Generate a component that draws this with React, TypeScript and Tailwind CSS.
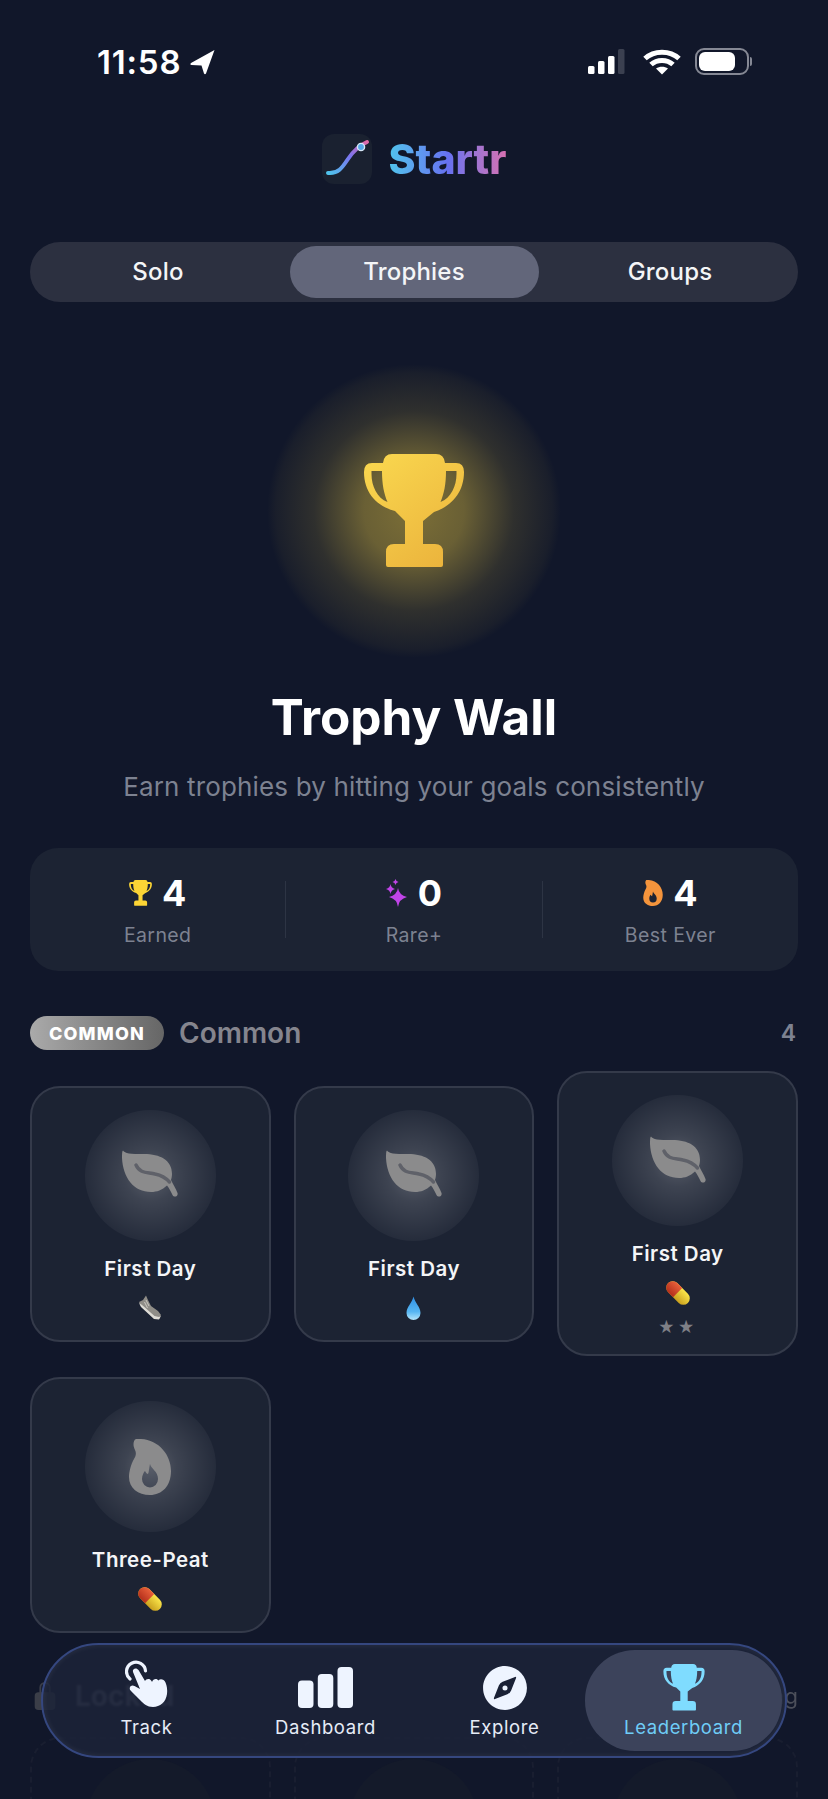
import React from "react";
import { IoCompass, IoLockClosed } from "react-icons/io5";

function Trophy({ w, h, fill }: { w: number; h: number; fill: string }) {
  return (
    <svg width={w} height={h} viewBox="0 0 100 114">
      <path
        fillRule="evenodd"
        fill={fill}
        d="M19 9 Q20 0 28 0 H72 Q80 0 81 9 H92 Q100 9 100 18 C100 38 88 52 70 58 L59 67 V90 H71 Q79 90 79 98 V111 Q79 113 77 113 H24 Q22 113 22 111 V98 Q22 90 30 90 H41 V67 L31 57 C12 52 0 38 0 18 Q0 9 8 9 Z M7.5 17 H18 C18 30 20 40 23.5 48 C13 44 7.5 32 7.5 20 Z M92.5 17 H82 C82 30 80 40 76.5 48 C87 44 92.5 32 92.5 20 Z"
      />
    </svg>
  );
}

function Flame({ w, h, fill }: { w: number; h: number; fill: string }) {
  return (
    <svg width={w} height={h} viewBox="0 0 42 56">
      <path
        fillRule="evenodd"
        fill={fill}
        d="M6 0.5 C4 3 4 7 6 11 C7.5 14 7 17 5 20 C2 25 0 33 0 38 C0 49 9 56 21 56 C33 56 42 47 42 32 C42 16 30 1 12 0 C9 -0.2 7 -0.2 6 0.5 Z M21 25 C22 30 29 32 29 40 A8 8.5 0 0 1 13 40 C13 36 15 33 16 32 C17 34 18 35 19 35 C20 33 20 29 21 25 Z"
      />
    </svg>
  );
}

const Leaf = () => (
  <svg className="mb-[3px]" width="56" height="47" viewBox="0 0 56 47">
    <path
      fill="#8b8b8c"
      d="M1 0.5 C3 3.5 8 4 22 4 C38 4 50 10 50 24 C50 26 49.5 28.5 49 30 C51 34 54 39 55.5 43 C56.5 46.5 52 48 50.5 45 C49 41.5 47 38 45 35.5 C40 40 35 42 29 42 C12 42 1 28 0 8 C0 4 0 1 1 0.5 Z"
    />
    <path d="M14 15 C18 24 26 22 33 24 C38 25 43 27 47.5 32" fill="none" stroke="#5f6169" strokeWidth="3.5" strokeLinecap="round" />
  </svg>
);

const Sparkle = () => (
  <svg width="22" height="28" viewBox="0 0 22 28" fill="#c044e8">
    <path d="M12 9 Q13 16 21 18 Q13 20 12 28 Q11 20 3 18 Q11 16 12 9 Z" />
    <path d="M4.5 5 Q5 9 9 10 Q5 11 4.5 15 Q4 11 0 10 Q4 9 4.5 5 Z" />
    <path d="M9.5 0 Q10 2.5 12.5 3 Q10 3.5 9.5 6 Q9 3.5 6.5 3 Q9 2.5 9.5 0 Z" />
  </svg>
);

const Hand = () => (
  <svg className="mb-[8px]" width="43" height="48" viewBox="0 0 43 48">
    <path d="M20.5 11 A9.5 9.5 0 1 0 5 19" fill="none" stroke="#eef4ff" strokeWidth="3.2" strokeLinecap="round" />
    <path
      fill="#eef4ff"
      d="M8 12 C7 8.5 11.5 7 13.5 10 L20 21 C21 18.5 25 18 26.5 21 L27 22 C28 18.5 32 18 33.5 20.5 C35 18.5 39 19 40.5 22.5 C42 26 42.5 30 42 34 C41 42 35 47 28 47 C22 47 19 44 15 40 L6 31 C3 28 6 24 9.5 26 L15 29 Z"
    />
  </svg>
);

const Shoe = () => (
  <svg width="24" height="25" viewBox="0 0 24 25">
    <path d="M8 0.5 L9.5 4 L13 11 L20 16 L23 20 L21 24 L16 23 L3 11 L1 7 L5 5 Z" fill="#8f8d88" />
    <path d="M1 8 L3 12 L16 24 L21 24.5 L23 21 L21 22 L16.5 21 L4 10 Z" fill="#dedcd6" />
    <path d="M8 5 L11 11 M6.5 7 L9.5 13" stroke="#c9c7c1" strokeWidth="1" />
  </svg>
);

const Drop = () => (
  <svg width="15" height="24" viewBox="0 0 15 24">
    <defs>
      <linearGradient id="dropG" x1="0" y1="0" x2="0" y2="1">
        <stop offset="0" stopColor="#2f8fe6" />
        <stop offset="0.65" stopColor="#57b6f2" />
        <stop offset="1" stopColor="#b5e6fc" />
      </linearGradient>
    </defs>
    <path d="M7.5 0.5 C9 7 14.5 11 14.5 17 A7 7 0 0 1 0.5 17 C0.5 11 6 7 7.5 0.5 Z" fill="url(#dropG)" />
  </svg>
);

const Pill = () => (
  <svg width="24" height="24" viewBox="0 0 24 24">
    <defs>
      <linearGradient id="pillY" x1="0" y1="0" x2="0" y2="1">
        <stop offset="0" stopColor="#fbe64a" />
        <stop offset="1" stopColor="#c9a01e" />
      </linearGradient>
      <linearGradient id="pillR" x1="0" y1="0" x2="0" y2="1">
        <stop offset="0" stopColor="#e9603a" />
        <stop offset="1" stopColor="#b42f1c" />
      </linearGradient>
    </defs>
    <g transform="rotate(45 12 12)">
      <rect x="-2" y="5.5" width="28" height="13" rx="6.5" fill="url(#pillY)" />
      <path d="M4.5 5.5 H11.5 V18.5 H4.5 A6.5 6.5 0 0 1 4.5 5.5 Z" fill="url(#pillR)" />
    </g>
  </svg>
);

function Card({ name, icon, emoji, stars }: { name: string; icon: React.ReactNode; emoji: React.ReactNode; stars?: boolean }) {
  return (
    <div className={`flex flex-col items-center rounded-[30px] border-2 border-[#343a4a] bg-[#1c2333] pt-[22px] ${stars ? "pb-[18px]" : "pb-[20px]"}`}>
      <div className="flex h-[131px] w-[131px] items-center justify-center rounded-full bg-[radial-gradient(circle,rgba(255,255,255,0.27)_0%,rgba(255,255,255,0.15)_28%,rgba(255,255,255,0.045)_70%)]">
        {icon}
      </div>
      <div className="mt-[15px] text-[20.5px] font-semibold leading-[26px] tracking-[0.5px] text-[#f4f5f7]">{name}</div>
      <div className="mt-[14px] flex h-[24px] items-center justify-center">{emoji}</div>
      {stars && <div className="mt-[13px] text-[16px] leading-[18px] tracking-[3px] text-[#7e7f86]">★★</div>}
    </div>
  );
}

function Stat({ icon, value, label }: { icon: React.ReactNode; value: string; label: string }) {
  return (
    <div className="flex flex-1 flex-col items-center pt-[5px]">
      <div className="flex h-[32px] items-center gap-[10px]">
        {icon}
        <span className="text-[36px] font-bold leading-[32px] text-white">{value}</span>
      </div>
      <div className="mt-[14px] text-[19.5px] leading-[24px] tracking-[0.4px] text-[#7d8291]">{label}</div>
    </div>
  );
}

function GhostCard() {
  return (
    <div className="flex h-[200px] justify-center rounded-[30px] border-2 border-dashed border-[#191e30] pt-[20px]">
      <div className="h-[131px] w-[131px] rounded-full bg-[#141a2a]" />
    </div>
  );
}

function NavItem({ icon, label, active }: { icon: React.ReactNode; label: string; active?: boolean }) {
  return (
    <div className={`flex flex-col items-center justify-center ${active ? "mx-[-9px] h-[101px] rounded-[50px] bg-[#3c435b]" : ""}`}>
      <div className="flex h-[50px] items-center justify-center">{icon}</div>
      <div className={`mt-[2px] text-[18.5px] font-normal leading-[24px] tracking-[0.6px] ${active ? "text-[#6fcdf7]" : "text-[#e6ecf7]"}`}>{label}</div>
    </div>
  );
}

export default function App() {
  return (
    <div className="relative h-[1799px] w-[828px] overflow-hidden bg-[#11172a] font-['Inter',sans-serif] text-white">
      <svg className="absolute h-0 w-0">
        <defs>
          <linearGradient id="goldG" x1="0.15" y1="0" x2="0.85" y2="1">
            <stop offset="0" stopColor="#f9d64e" />
            <stop offset="1" stopColor="#ebb33c" />
          </linearGradient>
        </defs>
      </svg>

      {/* Status bar */}
      <div className="flex items-center justify-between pt-[48px] pr-[76px] pl-[97px]">
        <div className="flex h-[26px] items-center gap-[8px]">
          <span className="text-[33px] font-semibold leading-[26px] tracking-[0.8px]">11:58</span>
          <svg width="27" height="26" viewBox="0 0 26 26" fill="#fff">
            <path d="M25 1 L1.5 14 Q0 15.5 2 16 L12 16.5 L14.5 24.5 Q15.5 26 16.5 24.5 Z" />
          </svg>
        </div>
        <div className="flex items-center gap-[14px]">
          <svg width="42" height="26" viewBox="0 0 42 26">
            <rect x="1" y="17" width="6.5" height="8" rx="1.5" fill="#fff" />
            <rect x="11" y="12" width="6.5" height="13" rx="1.5" fill="#fff" />
            <rect x="21" y="7" width="6.5" height="18" rx="1.5" fill="#fff" />
            <rect x="31" y="0" width="6.5" height="25" rx="1.5" fill="#3b4050" />
          </svg>
          <svg width="38" height="26" viewBox="0 0 38 26" fill="none" stroke="#fff" strokeWidth="5">
            <path d="M2 9.5 C11 1 27 1 36 9.5" />
            <path d="M8 15.5 C14 10 24 10 30 15.5" />
            <path d="M19 25.5 L13 19.5 C16.5 17 21.5 17 25 19.5 Z" fill="#fff" stroke="none" />
          </svg>
          <div className="flex items-center">
            <div className="flex h-[27px] w-[54px] items-center rounded-[9px] border-2 border-[#858894] p-[2px]">
              <div className="h-full w-[36px] rounded-[6px] bg-white" />
            </div>
            <div className="ml-[1px] h-[9px] w-[2px] rounded-r-full bg-[#858894]" />
          </div>
        </div>
      </div>

      {/* Logo */}
      <div className="mt-[59px] flex items-center justify-center gap-[17px]">
        <div className="flex h-[50px] w-[50px] items-center justify-center rounded-[12px] bg-[#1a2130]">
          <svg width="50" height="50" viewBox="0 0 50 50" fill="none">
            <defs>
              <linearGradient id="logoG" x1="0" y1="1" x2="1" y2="0">
                <stop offset="0" stopColor="#4fc3ec" />
                <stop offset="0.55" stopColor="#7a74ef" />
                <stop offset="1" stopColor="#e06aa8" />
              </linearGradient>
            </defs>
            <path d="M6 39 C16 40 20 34 26 25 C30 19 36 12 45 8" stroke="url(#logoG)" strokeWidth="4" strokeLinecap="round" />
            <circle cx="39" cy="13" r="3.6" fill="#55a8e8" stroke="#d8e8f8" strokeWidth="1.4" />
          </svg>
        </div>
        <span className="bg-gradient-to-r from-[#4fc3ec] via-[#6670f0] to-[#d86fb0] bg-clip-text text-[41px] font-extrabold leading-[48px] text-transparent">
          Startr
        </span>
      </div>

      {/* Tabs */}
      <div className="mx-[30px] mt-[58px] grid h-[60px] grid-cols-3 items-center rounded-[30px] bg-[#2c3040] text-[24px] font-medium tracking-[0.2px] text-[#f4f5f7]">
        <div className="text-center">Solo</div>
        <div className="mx-auto flex h-[52px] w-[249px] items-center justify-center rounded-[26px] bg-[#62667a]">Trophies</div>
        <div className="text-center">Groups</div>
      </div>

      {/* Hero */}
      <div className="mt-[62px] flex flex-col items-center">
        <div className="flex h-[294px] w-[294px] items-center justify-center rounded-full bg-[radial-gradient(circle_closest-side,rgba(250,214,70,0.46)_0%,rgba(250,214,70,0.38)_34%,rgba(250,214,70,0.13)_68%,rgba(250,214,70,0.04)_94%,rgba(250,214,70,0)_100%)]">
          <Trophy w={100} h={114} fill="url(#goldG)" />
        </div>
        <h1 className="mt-[28px] text-[49.5px] font-bold leading-[62px] text-white">Trophy Wall</h1>
        <p className="mt-[22px] text-[26px] leading-[34px] tracking-[0.15px] text-[#7d8291]">Earn trophies by hitting your goals consistently</p>
      </div>

      {/* Stats */}
      <div className="mx-[30px] mt-[44px] flex h-[123px] items-center rounded-[28px] bg-[#1c2333]">
        <Stat icon={<Trophy w={23} h={26} fill="#fcd535" />} value="4" label="Earned" />
        <div className="h-[57px] w-px bg-[#2d3444]" />
        <Stat icon={<Sparkle />} value="0" label="Rare+" />
        <div className="h-[57px] w-px bg-[#2d3444]" />
        <Stat icon={<Flame w={20} h={26} fill="#f4943c" />} value="4" label="Best Ever" />
      </div>

      {/* Section header */}
      <div className="mx-[30px] mt-[45px] flex h-[34px] items-center">
        <span className="flex h-[34px] w-[134px] items-center justify-center rounded-full bg-gradient-to-r from-[#aaaaaa] to-[#666666] text-[18px] font-extrabold tracking-[1.2px] text-white">
          COMMON
        </span>
        <span className="ml-[15px] text-[28px] font-semibold text-[#85858e]">Common</span>
        <span className="ml-auto mr-[2px] text-[23px] font-semibold text-[#7d8291]">4</span>
      </div>

      {/* Grid */}
      <div className="mx-[30px] mt-[21px] grid grid-cols-3 items-center gap-x-[23px] gap-y-[21px]">
        <Card name="First Day" icon={<Leaf />} emoji={<Shoe />} />
        <Card name="First Day" icon={<Leaf />} emoji={<Drop />} />
        <Card name="First Day" icon={<Leaf />} emoji={<Pill />} stars />
        <Card name="Three-Peat" icon={<Flame w={42} h={56} fill="#8b8b8c" />} emoji={<Pill />} />
      </div>

      {/* Locked section, mostly hidden under the nav */}
      <div className="mx-[30px] mt-[46px] flex h-[34px] items-center">
        <IoLockClosed size={30} color="#3b3e48" />
        <span className="ml-[15px] text-[28px] font-bold text-[#5a5f70] blur-[1px]">Locked</span>
        <span className="ml-auto text-[22px] text-[#4c4f5a] blur-[0.5px]">Remaining</span>
      </div>
      <div className="mx-[30px] mt-[24px] grid grid-cols-3 gap-x-[23px]">
        <GhostCard />
        <GhostCard />
        <GhostCard />
      </div>

      {/* Bottom nav */}
      <div className="absolute top-[1643px] left-[41px] grid h-[115px] w-[746px] grid-cols-[179px_179px_179px_179px] content-center rounded-[58px] border-2 border-[#35477f] bg-[#1c2338]/85 pl-[14px] shadow-[inset_0_0_6px_rgba(255,255,255,0.08)]">
        <NavItem icon={<Hand />} label="Track" />
        <NavItem
          icon={
            <svg width="55" height="41" viewBox="0 0 55 41">
              <rect x="0" y="13.5" width="15.5" height="27.5" rx="4" fill="#eef4ff" />
              <rect x="19.8" y="7" width="15.5" height="34" rx="4" fill="#eef4ff" />
              <rect x="39.5" y="0" width="15.5" height="41" rx="4" fill="#eef4ff" />
            </svg>
          }
          label="Dashboard"
        />
        <NavItem icon={<IoCompass size={54} color="#eef4ff" />} label="Explore" />
        <NavItem active icon={<Trophy w={42} h={47} fill="#7fdcff" />} label="Leaderboard" />
      </div>
    </div>
  );
}
